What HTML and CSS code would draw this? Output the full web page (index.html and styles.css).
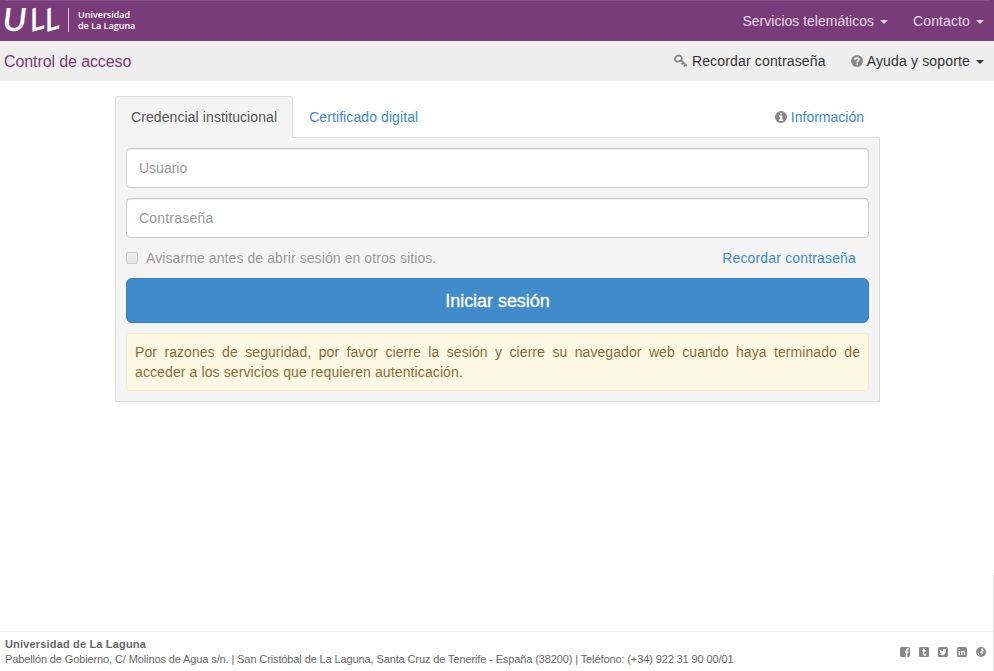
FILE: index.html
```html
<!DOCTYPE html>
<html lang="es">
<head>
<meta charset="utf-8">
<title>Control de acceso</title>
<link rel="stylesheet" href="styles.css">
</head>
<body>
<header class="topbar">
  <a class="brand">
    <svg class="mark" width="63" height="41" viewBox="0 0 63 41" aria-label="ULL">
      <text class="mark-u" transform="translate(1.5 31) skewX(-7)" textLength="24" lengthAdjust="spacingAndGlyphs">U</text>
      <text transform="translate(30 32.5) skewY(-16)" textLength="14.5" lengthAdjust="spacingAndGlyphs">L</text>
      <text transform="translate(45 32.5) skewY(-16)" textLength="14.5" lengthAdjust="spacingAndGlyphs">L</text>
    </svg>
    <span class="brand-name"><span>Universidad</span><span>de La Laguna</span></span>
  </a>
  <nav class="menu">
    <a class="services">Servicios telemáticos<i class="caret"></i></a>
    <a class="contact">Contacto<i class="caret"></i></a>
  </nav>
</header>
<div class="subbar">
  <h1>Control de acceso</h1>
  <nav class="menu">
    <a class="remind"><svg class="icon" width="14" height="14" viewBox="0 0 14 14"><g fill="none" stroke="#888"><ellipse cx="4.4" cy="4.6" rx="3.5" ry="2.9" stroke-width="1.9" transform="rotate(-25 4.4 4.6)"/><path d="M6.8 6.2 12.9 12M9.2 8.4 7.5 10.3M11.5 10.4 9.8 12.5" stroke-width="1.9"/></g></svg>Recordar contraseña</a>
    <a class="help"><svg class="icon" width="12" height="12" viewBox="0 0 12 12"><circle cx="6" cy="6" r="6" fill="#888"/><path d="M4 4.7C4 2.4 8 2.3 8 4.6 8 5.9 6.1 5.9 6.1 7.3M6.1 8.3v1.7" fill="none" stroke="#eee" stroke-width="1.7"/></svg>Ayuda y soporte<i class="caret"></i></a>
  </nav>
</div>
<main class="login">
  <div class="tabs">
    <a class="tab active">Credencial institucional</a>
    <a class="tab">Certificado digital</a>
    <a class="info"><svg class="icon" width="12" height="12" viewBox="0 0 12 12"><circle cx="6" cy="6" r="6" fill="#888"/><path d="M5.1 1.8h2v1.7h-2zM4.3 4.6h2.9v4h1v1.3H4.1V8.6h1V5.9h-.8z" fill="#fff"/></svg>Información</a>
  </div>
  <form class="panel">
    <input class="field" type="text" placeholder="Usuario">
    <input class="field password" type="password" placeholder="Contraseña">
    <div class="options">
      <label><span class="check"></span><span class="warn">Avisarme antes de abrir sesión en otros sitios.</span></label>
      <a>Recordar contraseña</a>
    </div>
    <button class="submit" type="button">Iniciar sesión</button>
    <p class="notice"><span class="full">Por razones de seguridad, por favor cierre la sesión y cierre su navegador web cuando haya terminado de</span> <span>acceder a los servicios que requieren autenticación.</span></p>
  </form>
</main>
<footer class="footer">
  <address><strong>Universidad de La Laguna</strong><br><span class="street">Pabellón de Gobierno, C/ Molinos de Agua s/n. | San Cristóbal de La Laguna, Santa Cruz de Tenerife - España (38200) | Teléfono: (+34) 922 31 90 00/01</span></address>
  <div class="social">
    <svg width="10" height="10" viewBox="0 0 10 10"><rect width="10" height="10" rx="1.6" fill="#888"/><path d="M8.8 2H7.9Q6.6 2 6.6 3.3V10M4.9 5.1h3.6" fill="none" stroke="#fff" stroke-width="1.5"/></svg>
    <svg width="10" height="10" viewBox="0 0 10 10"><rect width="10" height="10" rx="1.6" fill="#888"/><path d="M4.7 1.5v4.9Q4.7 8 6.1 8H7.2M3 3.8h4.1" fill="none" stroke="#fff" stroke-width="1.5"/></svg>
    <svg width="10" height="10" viewBox="0 0 10 10"><rect width="10" height="10" rx="1.6" fill="#888"/><path d="M1.7 2.5Q3.1 4 4.9 4.1C4.7 2 6.6 1.6 7.4 2.6L8.6 2.3 8 3.4C8.1 7.7 4.5 9 1.6 7.6L3.3 7 2 5.6z" fill="#fff"/></svg>
    <svg width="10" height="10" viewBox="0 0 10 10"><rect width="10" height="10" rx="1.6" fill="#888"/><path d="M2.3 1.7v1.2M2.3 4v4.3M4.7 4v4.3M4.8 5.3Q5.2 4.5 6.2 4.5 7.6 4.5 7.6 6v2.3" fill="none" stroke="#fff" stroke-width="1.3"/></svg>
    <svg width="10" height="10" viewBox="0 0 10 10"><circle cx="5" cy="5" r="5" fill="#888"/><path d="M5.6 1.2 7 1.8 7.6 3.4 6.5 4.5 7 6 6.6 7.6 5.6 6.4 4 5.4 4.6 4.2 6.2 3.2 5 2.4zM1.3 5.4 2.6 6 3.1 7.5 4.3 8.8Q1.8 8.3 1.3 5.4z" fill="#fff"/></svg>
  </div>
</footer>
<div class="edge"></div>
</body>
</html>
```

FILE: styles.css
```css
* { box-sizing: border-box; }
body {
  margin: 0;
  height: 671px;
  display: flex;
  flex-direction: column;
  position: relative;
  overflow: hidden;
  background: #fff;
  color: #333;
  font: 14px/20px "Liberation Sans", Arial, sans-serif;
}
a { color: #428bca; }
.topbar, .subbar {
  display: flex;
  justify-content: space-between;
  flex: none;
}
.topbar {
  height: 41px;
  background: linear-gradient(#8a5189, #8a5189) 5px 0 / 984px 1px no-repeat #7a3b7a;
}
.brand { display: flex; color: #fff; }
.mark { display: block; overflow: visible; fill: #fff; font: 600 32px/1 Lato, sans-serif; }
.brand-name {
  display: flex;
  flex-direction: column;
  height: 24px;
  margin: 8px 0 0 5px;
  padding: 1px 0 0 9px;
  border-left: 1px solid #d7c4d7;
  font: 600 9px/11px "Open Sans", sans-serif;
}
.menu { display: flex; padding-right: 10px; }
.menu a { display: flex; align-items: center; white-space: nowrap; }
.topbar .menu a { color: #e6dce6; }
.services { margin-right: 25px; }
.contact { letter-spacing: .12px; }
.caret {
  margin-left: 6px;
  margin-top: 2px;
  border: 4px solid transparent;
  border-top-color: currentColor;
  border-bottom: 0;
}
.subbar { height: 40px; background: #eee; }
.subbar h1 {
  margin: 0;
  padding-left: 4px;
  color: #7a3b7a;
  font-size: 16px;
  font-weight: normal;
  line-height: 41px;
  letter-spacing: -.1px;
}
.subbar .menu a { color: #333; letter-spacing: .16px; }
.subbar .menu .remind { margin-right: 25px; }
.icon { margin-right: 4px; flex: none; }
.login { width: 765px; margin: 15px 0 0 115px; }
.tabs { display: flex; height: 42px; }
.tab { padding: 10px 15px; border: 1px solid transparent; letter-spacing: .09px; }
.active {
  z-index: 1;
  background: #f4f4f4;
  border-color: #ddd;
  border-bottom: 0;
  border-radius: 4px 4px 0 0;
  color: #555;
}
.info { display: flex; align-items: center; margin-left: auto; padding-right: 16px; }
.panel {
  display: flex;
  flex-direction: column;
  height: 265px;
  margin-top: -1px;
  padding: 10px;
  background: #f4f4f4;
  border: 1px solid #ddd;
}
.field {
  width: 100%;
  height: 40px;
  margin: 0 0 10px;
  padding: 6px 12px;
  background: #fff;
  border: 1px solid #ccc;
  border-radius: 4px;
  box-shadow: inset 0 1px 1px rgba(0, 0, 0, .075);
  font: inherit;
}
.password { letter-spacing: .2px; }
.field::placeholder { color: #999; opacity: 1; }
.options {
  display: flex;
  justify-content: space-between;
  height: 20px;
  margin-bottom: 10px;
  padding-right: 13px;
  color: #999;
}
.options label { display: flex; align-items: center; }
.options a { letter-spacing: .16px; }
.warn { letter-spacing: .09px; }
.check {
  width: 12px;
  height: 12px;
  margin-right: 8px;
  background: linear-gradient(#eee, #e2e2e2);
  border: 1px solid #ccc;
  border-radius: 2px;
}
.submit {
  height: 45px;
  padding: 0;
  background: #428bca;
  border: 1px solid #357ebd;
  border-radius: 6px;
  color: #fff;
  font: 18px/24px "Liberation Sans", Arial, sans-serif;
  letter-spacing: -.05px;
  -webkit-text-stroke: .3px #fff;
}
.notice {
  height: 58px;
  margin: 10px 0 0;
  padding: 8px;
  background: #fcf8e3;
  border: 1px solid #faebcc;
  border-radius: 4px;
  color: #8a6d3b;
  letter-spacing: .11px;
}
.notice span { display: block; white-space: nowrap; }
.notice .full { white-space: normal; text-align: justify; text-align-last: justify; letter-spacing: .06px; }
.footer {
  display: flex;
  justify-content: space-between;
  height: 40px;
  margin-top: auto;
  padding: 5px 8px 0 5px;
  border-top: 1px solid #eee;
  color: #666;
}
.footer address { font: 11px/15px "Liberation Sans", Arial, sans-serif; white-space: nowrap; }
.footer strong { letter-spacing: .17px; }
.street { letter-spacing: -.115px; }
.social { display: flex; gap: 9px; padding-top: 10px; }
.edge {
  position: absolute;
  right: 0;
  bottom: 0;
  width: 1px;
  height: 96px;
  background: #ddd;
}
```
